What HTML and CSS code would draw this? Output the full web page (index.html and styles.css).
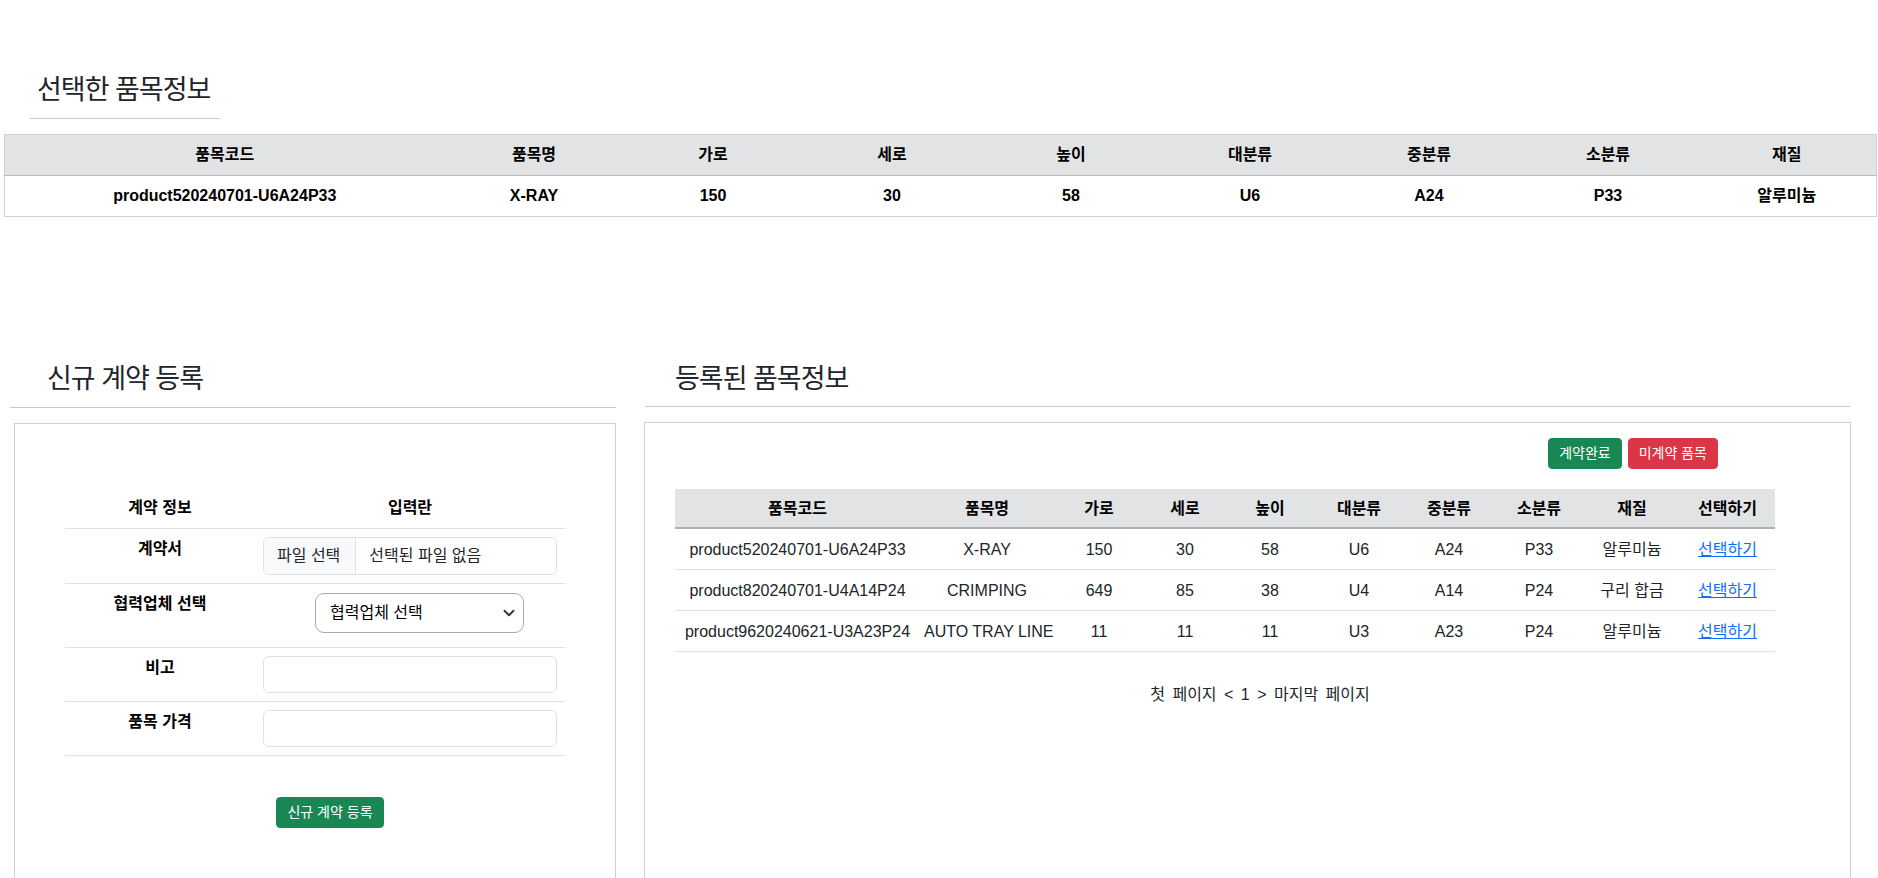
FILE: index.html
```html
<!DOCTYPE html>
<html lang="ko">
<head>
<meta charset="utf-8">
<title>계약 등록</title>
<link rel="stylesheet" href="styles.css">
</head>
<body>
<main class="page">
  <section class="selected">
    <h3 class="title sel-title">선택한 품목정보</h3>
    <hr class="sel-rule">
    <table class="sel-table">
      <colgroup><col class="c-code"><col span="8" class="c-std"></colgroup>
      <thead>
        <tr><th>품목코드</th><th>품목명</th><th>가로</th><th>세로</th><th>높이</th><th>대분류</th><th>중분류</th><th>소분류</th><th>재질</th></tr>
      </thead>
      <tbody>
        <tr><th>product520240701-U6A24P33</th><th>X-RAY</th><th>150</th><th>30</th><th>58</th><th>U6</th><th>A24</th><th>P33</th><th>알루미늄</th></tr>
      </tbody>
    </table>
  </section>

  <section class="lower">
    <div class="left-col">
      <h3 class="title left-title">신규 계약 등록</h3>
      <hr class="sec-rule">
      <div class="card left-card">
        <table class="form-table">
          <colgroup><col class="fc-label"><col class="fc-input"></colgroup>
          <thead><tr><th>계약 정보</th><th>입력란</th></tr></thead>
          <tbody>
            <tr><th>계약서</th><td><div class="file-input"><span class="file-btn">파일 선택</span><span class="file-name">선택된 파일 없음</span></div></td></tr>
            <tr><th>협력업체 선택</th><td><div class="select-box"><span>협력업체 선택</span><svg class="chev" width="12" height="12" viewBox="0 0 16 16"><path d="M2 5l6 6 6-6" fill="none" stroke="#343a40" stroke-width="2.6" stroke-linecap="round" stroke-linejoin="round"/></svg></div></td></tr>
            <tr><th>비고</th><td><input class="text-input" type="text"></td></tr>
            <tr><th>품목 가격</th><td><input class="text-input" type="text"></td></tr>
          </tbody>
        </table>
        <div class="submit-row"><button class="btn btn-success" type="button">신규 계약 등록</button></div>
      </div>
    </div>

    <div class="right-col">
      <h3 class="title right-title">등록된 품목정보</h3>
      <hr class="sec-rule right-rule">
      <div class="card right-card">
        <div class="filter-row">
          <button class="btn btn-success" type="button">계약완료</button>
          <button class="btn btn-danger" type="button">미계약 품목</button>
        </div>
        <table class="list-table">
          <colgroup>
            <col class="w245"><col class="w134"><col class="w90"><col class="w82"><col class="w88"><col class="w90"><col class="w90"><col class="w90"><col class="w96"><col class="w95">
          </colgroup>
          <thead>
            <tr><th>품목코드</th><th>품목명</th><th>가로</th><th>세로</th><th>높이</th><th>대분류</th><th>중분류</th><th>소분류</th><th>재질</th><th>선택하기</th></tr>
          </thead>
          <tbody>
            <tr><td>product520240701-U6A24P33</td><td>X-RAY</td><td>150</td><td>30</td><td>58</td><td>U6</td><td>A24</td><td>P33</td><td>알루미늄</td><td><a href="#">선택하기</a></td></tr>
            <tr><td>product820240701-U4A14P24</td><td>CRIMPING</td><td>649</td><td>85</td><td>38</td><td>U4</td><td>A14</td><td>P24</td><td>구리 합금</td><td><a href="#">선택하기</a></td></tr>
            <tr><td>product9620240621-U3A23P24</td><td>AUTO TRAY LINE</td><td>11</td><td>11</td><td>11</td><td>U3</td><td>A23</td><td>P24</td><td>알루미늄</td><td><a href="#">선택하기</a></td></tr>
          </tbody>
        </table>
        <div class="pager">첫 페이지 &lt; 1 &gt; 마지막 페이지</div>
      </div>
    </div>
  </section>
</main>
</body>
</html>
```

FILE: styles.css
```css
* { box-sizing: border-box; }
html, body { margin: 0; padding: 0; overflow: hidden; }
body {
  width: 1878px;
  height: 878px;
  background: #fff;
  color: #212529;
  font-family: "Liberation Sans", "Noto Sans CJK KR", sans-serif;
  font-size: 16px;
  line-height: 1.5;
}

.title {
  margin: 0;
  font-size: 27px;
  font-weight: 400;
  line-height: 32px;
  letter-spacing: -1px;
  color: #212529;
}

/* ---------- selected item ---------- */
.selected { padding-top: 74px; }
.sel-title { padding-left: 37px; }
.sel-rule {
  margin: 12px 0 15px 30px;
  width: 190px;
  height: 0;
  border: 0;
  border-top: 1px solid #c9c9c9;
}
.sel-table {
  margin-left: 4px;
  width: 1872px;
  border-collapse: collapse;
  table-layout: fixed;
  border: 1px solid #cfcfcf;
}
.c-code { width: 440px; }
.c-std { width: 179px; }
.sel-table th {
  padding: 8px;
  text-align: center;
  font-weight: 700;
  white-space: nowrap;
  color: #000;
}
.sel-table thead th {
  background: #e2e3e5;
  border-bottom: 1px solid #b9b9b9;
}

/* ---------- lower section ---------- */
.lower {
  display: flex;
  gap: 28px;
  margin-top: 146px;
  padding-left: 10px;
}
.left-col { width: 606px; flex: none; }
.right-col { width: 1207px; flex: none; }
.left-title { padding-left: 37px; }
.right-title { padding-left: 31px; }
.sec-rule {
  margin: 12px 0 15px 0;
  height: 0;
  border: 0;
  border-top: 1px solid #c9c9c9;
}
.right-rule { margin: 11px 1px 15px 1px; }

.card {
  background: #fff;
  border: 1px solid #cfcfcf;
  height: 520px;
}
.left-card {
  margin-left: 4px;
  width: 602px;
  padding-top: 64px;
}
.right-card {
  padding: 15px 0 0 30px;
}

/* ---------- form table ---------- */
.form-table {
  width: 500px;
  margin: 0 auto;
  border-collapse: collapse;
  table-layout: fixed;
}
.fc-label { width: 190px; }
.fc-input { width: 310px; }
.form-table th,
.form-table td {
  padding: 8px;
  vertical-align: top;
  border-bottom: 1px solid #dee2e6;
  text-align: center;
}
.form-table th { font-weight: 700; color: #000; }

.file-input {
  display: flex;
  height: 38px;
  border: 1px solid #dee2e6;
  border-radius: 6px;
  overflow: hidden;
  text-align: left;
  color: #212529;
}
.file-btn {
  display: flex;
  align-items: center;
  padding: 0 15px 0 13px;
  background: #f8f9fa;
  border-right: 1px solid #dee2e6;
}
.file-name {
  display: flex;
  align-items: center;
  padding-left: 13px;
}

.select-box {
  display: flex;
  align-items: center;
  justify-content: space-between;
  width: 209px;
  height: 40px;
  margin: 1px 0 6px 52px;
  padding: 0 8px 0 14px;
  border: 1px solid #a9a9a9;
  border-radius: 9px;
  text-align: left;
  color: #000;
}
.chev { flex: none; }

.text-input {
  display: block;
  width: 100%;
  height: 37px;
  border: 1px solid #dee2e6;
  border-radius: 6px;
  font: inherit;
  background: #fff;
}

.submit-row {
  display: flex;
  justify-content: center;
  padding-left: 30px;
  margin-top: 41px;
}

/* ---------- buttons ---------- */
.btn {
  font-family: inherit;
  font-size: 14px;
  line-height: 1.5;
  padding: 4px 10px;
  border-radius: 4px;
  border: 1px solid transparent;
  color: #fff;
  cursor: pointer;
}
.btn-success { background: #198754; border-color: #198754; }
.btn-danger { background: #dc3545; border-color: #dc3545; }

.filter-row {
  display: flex;
  justify-content: flex-end;
  gap: 6px;
  width: 1100px;
  padding-right: 57px;
}

/* ---------- list table ---------- */
.list-table {
  width: 1100px;
  margin-top: 20px;
  border-collapse: collapse;
  table-layout: fixed;
}
.w245 { width: 245px; } .w134 { width: 134px; } .w90 { width: 90px; }
.w82 { width: 82px; } .w88 { width: 88px; } .w96 { width: 96px; } .w95 { width: 95px; }
.list-table th,
.list-table td {
  padding: 9px 4px 7px;
  text-align: center;
  white-space: nowrap;
}
.list-table thead th {
  background: #e2e3e5;
  font-weight: 700;
  color: #000;
  border-bottom: 2px solid #b0b0b0;
  padding: 8px 4px 6px;
}
.list-table tbody td {
  border-bottom: 1px solid #dee2e6;
  color: #212529;
}
.list-table a { color: #0d6efd; text-decoration: underline; }

.pager {
  width: 1100px;
  margin-top: 31px;
  padding-left: 70px;
  text-align: center;
  word-spacing: 3px;
  color: #212529;
}
```
